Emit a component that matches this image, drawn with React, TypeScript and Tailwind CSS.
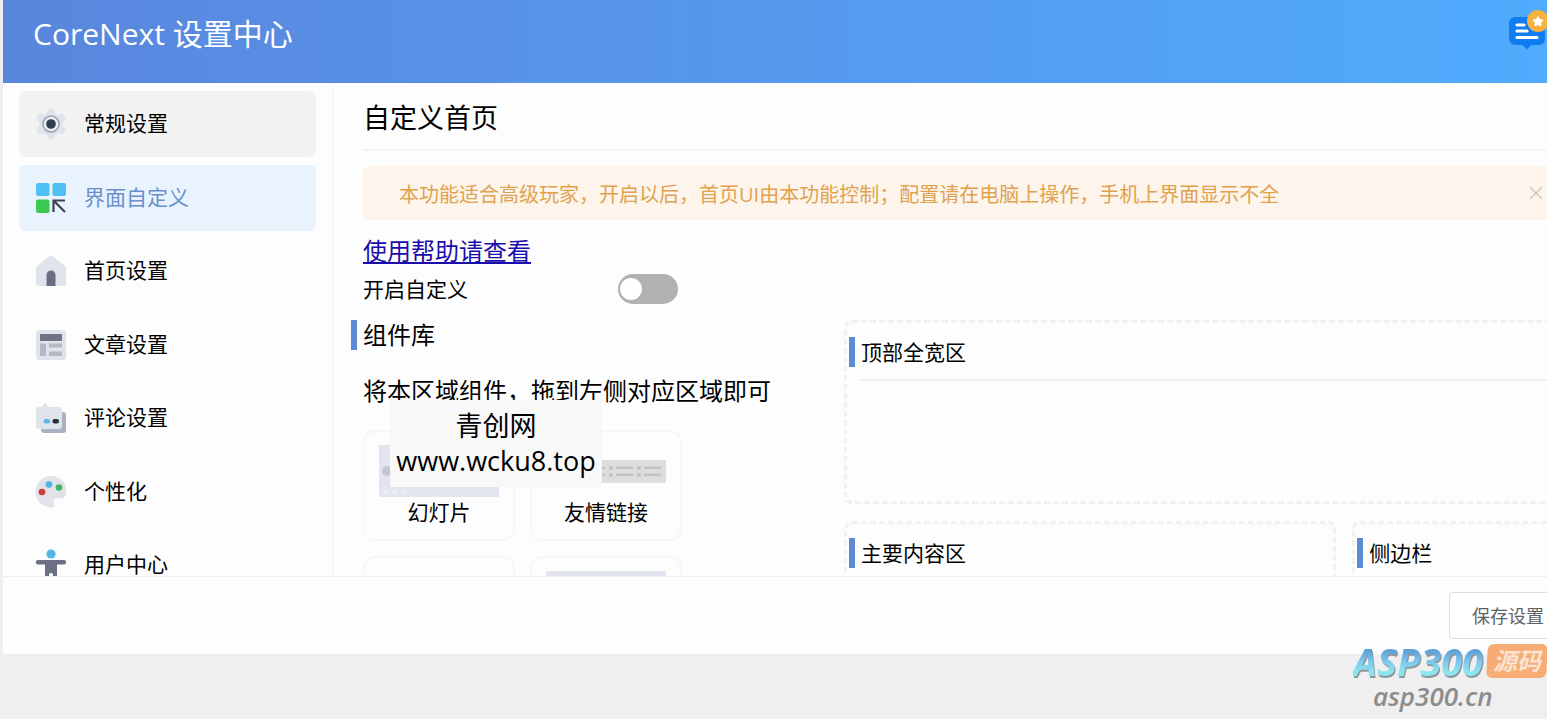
import type { ReactNode } from 'react'
import { X } from 'lucide-react'

type MenuItemProps = {
  label: string
  icon: ReactNode
  state?: 'idle' | 'hover' | 'active'
}

const ITEM_STYLE = {
  idle: 'text-black',
  hover: 'bg-[#f2f2f2] text-black',
  active: 'bg-[#e8f3fe] text-[#6a8fcb]',
}

const TOOTH = 'M11.5 6l2-5.500h5l2 5.500zM11.5 26l2 5.500h5l2-5.500z'

const IconGear = () => (
  <svg viewBox="0 0 32 32" className="size-8">
    <g fill="#dfe3ec">
      <circle cx="16" cy="16" r="11.5" />
      <path d={TOOTH} />
      <path d={TOOTH} transform="rotate(60 16 16)" />
      <path d={TOOTH} transform="rotate(120 16 16)" />
    </g>
    <circle cx="16" cy="16" r="8" fill="#eceff4" stroke="#9da7b6" strokeWidth="1.6" />
    <circle cx="16" cy="16" r="4.8" fill="#2f3e50" />
  </svg>
)

const IconLayout = () => (
  <svg viewBox="0 0 32 32" className="size-8">
    <rect x="1" y="1" width="13.5" height="13" rx="2" fill="#4fc0f5" />
    <rect x="17.5" y="1" width="13.5" height="13" rx="2" fill="#4fc0f5" />
    <rect x="1" y="17.5" width="13.5" height="13.5" rx="2" fill="#3cc94f" />
    <path d="M18.5 30V18.5H30M19 19l11 11" fill="none" stroke="#38434f" strokeWidth="2.2" />
  </svg>
)

const IconHome = () => (
  <svg viewBox="0 0 32 32" className="size-8">
    <path
      d="M14 1.6a3.4 3.4 0 0 1 4 0l11.4 9A4 4 0 0 1 31 13.8V28.5a2.5 2.5 0 0 1-2.5 2.5h-25A2.5 2.5 0 0 1 1 28.5V13.8a4 4 0 0 1 1.6-3.2z"
      fill="#dfe3ec"
    />
    <path d="M11.5 31V20a4.5 4.5 0 0 1 9 0v11z" fill="#6b6f83" />
  </svg>
)

const IconArticle = () => (
  <svg viewBox="0 0 32 32" className="size-8">
    <rect x="1" y="1" width="30" height="30" rx="3.5" fill="#dfe3ec" />
    <rect x="5" y="5" width="22" height="7" fill="#6f7387" />
    <rect x="5" y="14.5" width="6" height="12.5" fill="#b3b8c6" />
    <path d="M14 14.5h13v4H14zM14 22.5h13V27H14z" fill="#b3b8c6" />
  </svg>
)

const IconComment = () => (
  <svg viewBox="0 0 32 32" className="size-8">
    <rect x="6" y="10" width="25" height="21" rx="3" fill="#aab2c2" />
    <path
      d="M3.5 5H7l3-4.5L13 5h11.5A2.5 2.5 0 0 1 27 7.5v17a2.5 2.5 0 0 1-2.5 2.5h-21A2.5 2.5 0 0 1 1 24.5v-17A2.5 2.5 0 0 1 3.5 5z"
      fill="#dfe4ec"
    />
    <rect x="8.5" y="17" width="6.5" height="4.5" rx="2" fill="#5bb8e8" />
    <rect x="17.5" y="17" width="6.5" height="4.5" rx="2" fill="#28323c" />
  </svg>
)

const IconPalette = () => (
  <svg viewBox="0 0 32 32" className="size-8">
    <path
      d="M16 0C7.4 0 .5 7 .5 16S8 31.500 17 31.500c2.500 0 2.800-2 2-4.500-1-3.500 1-5 4.500-4.500 4.500.6 8-1.500 8-7C31.500 7 24.600 0 16 0z"
      fill="#e2e2ea"
    />
    <circle cx="7" cy="16" r="3.3" fill="#cf3b3b" />
    <circle cx="14" cy="8.5" r="3.3" fill="#4fb3ea" />
    <circle cx="24" cy="11.5" r="3.3" fill="#43b565" />
  </svg>
)

const IconUser = () => (
  <svg viewBox="0 0 32 32" className="size-8">
    <circle cx="16" cy="5" r="4.6" fill="#51b7e6" />
    <path
      d="M3 11h26a2.2 2.2 0 0 1 0 4.4h-7V32h-4v-6a2 2 0 0 0-4 0v6h-4V15.4H3A2.2 2.2 0 0 1 3 11z"
      fill="#6c7084"
    />
  </svg>
)

const MENU: MenuItemProps[] = [
  { label: '常规设置', icon: <IconGear />, state: 'hover' },
  { label: '界面自定义', icon: <IconLayout />, state: 'active' },
  { label: '首页设置', icon: <IconHome /> },
  { label: '文章设置', icon: <IconArticle /> },
  { label: '评论设置', icon: <IconComment /> },
  { label: '个性化', icon: <IconPalette /> },
  { label: '用户中心', icon: <IconUser /> },
]

const MenuItem = ({ label, icon, state = 'idle' }: MenuItemProps) => (
  <button
    type="button"
    className={`flex h-[66px] w-full shrink-0 items-center gap-[17px] rounded-md px-4 text-[21px] ${ITEM_STYLE[state]}`}
  >
    {icon}
    <span>{label}</span>
  </button>
)

const Header = () => (
  <header className="flex h-[83px] shrink-0 items-start justify-between bg-linear-to-r from-[#5986dd] to-[#4facfe] pr-[21px] pl-[30px]">
    <h1 className="pt-3 text-[30px] leading-[44px] text-white">CoreNext 设置中心</h1>
    <button type="button" aria-label="消息" className="pt-2">
      <svg viewBox="0 0 42 44" className="h-11 w-[42px]">
        <path
          d="M7 9h24a6 6 0 0 1 6 6v16a6 6 0 0 1-6 6h-8l-4 4.5-5-4.5H7a6 6 0 0 1-6-6V15a6 6 0 0 1 6-6z"
          fill="#0f7df0"
        />
        <path d="M9 17h7M9 23h10M9 29.5h20" stroke="#fff" strokeWidth="3.2" strokeLinecap="round" />
        <circle cx="30" cy="13" r="11" fill="#f5b23c" />
        <path
          d="m30 9 1.4 2.8 3.1.4-2.3 2.2.6 3.1-2.800-1.500-2.800 1.500.6-3.100-2.300-2.200 3.100-.4z"
          fill="#fff"
          stroke="#fff"
          strokeWidth="1.5"
          strokeLinejoin="round"
        />
      </svg>
    </button>
  </header>
)

const BarTitle = ({ children, large }: { children: ReactNode; large?: boolean }) => (
  <div className="flex items-center gap-1.5">
    <span className="h-[30px] w-1.5 bg-[#5b8bd5]" />
    <h3 className={large ? 'text-2xl' : 'text-[21px] leading-[28px]'}>{children}</h3>
  </div>
)

const Zone = ({ title, className = '' }: { title: string; className?: string }) => (
  <section
    className={`rounded-lg border-[3px] border-dashed border-[#f1f1f1] pt-3.5 pr-3 pl-0.5 ${className}`}
  >
    <BarTitle>{title}</BarTitle>
    <hr className="mt-3 ml-3 border-t-2 border-[#efefef]" />
  </section>
)

const ThumbSlides = () => (
  <svg viewBox="0 0 120 52" className="h-[52px] w-[120px]">
    <rect width="120" height="52" fill="#e2e4ee" />
    <circle cx="8" cy="26" r="5" fill="#c4c6d0" />
    <circle cx="112" cy="26" r="5" fill="#c4c6d0" />
    <path d="M4 45h6v4H4zM13 45h6v4h-6zM22 45h6v4h-6z" fill="#eaecf4" />
  </svg>
)

const ThumbLinks = () => (
  <svg viewBox="0 0 120 23" className="h-[23px] w-[120px]">
    <rect width="120" height="23" fill="#dedede" />
    {[8, 36, 64, 92].map((x) => (
      <g key={x} fill="#c3c3c3">
        <circle cx={x + 1} cy="8" r="2" />
        <circle cx={x + 1} cy="15" r="2" />
        <rect x={x + 6} y="6.5" width="17" height="2.5" />
        <rect x={x + 6} y="13.5" width="17" height="2.5" />
      </g>
    ))}
  </svg>
)

const Widget = ({ name, children }: { name?: string; children?: ReactNode }) => (
  <div className="flex h-[111px] w-[152px] flex-col items-center rounded-xl border-2 border-[#f7f7f7] pt-[13px]">
    <div className="flex h-[52px] items-center">{children}</div>
    {name && <span className="text-[21px] leading-[30px]">{name}</span>}
  </div>
)

const Library = () => (
  <section className="relative w-[481px] shrink-0">
    <div className="-ml-3">
      <BarTitle large>组件库</BarTitle>
    </div>
    <p className="mt-6 text-2xl">将本区域组件，拖到左侧对应区域即可</p>
    <div className="mt-[23px] grid w-fit grid-cols-2 gap-[15px]">
      <Widget name="幻灯片">
        <ThumbSlides />
      </Widget>
      <Widget name="友情链接">
        <ThumbLinks />
      </Widget>
      <Widget />
      <Widget>
        <div className="h-[52px] w-[120px] bg-[#e2e4ee]" />
      </Widget>
    </div>
    <div className="absolute top-[81px] left-[27px] flex h-[87px] w-[212px] flex-col items-center bg-[#f8f8f9] pt-2 text-[27px] leading-[35px]">
      <span>青创网</span>
      <span>www.wcku8.top</span>
    </div>
  </section>
)

const SiteMark = () => (
  <div className="absolute right-0 bottom-1.5 flex flex-col items-start">
    <div className="flex items-center">
      <span className="bg-linear-to-b from-[#5a9fd6] from-20% via-[#7cc4ec] to-[#8ce6ee] to-80% bg-clip-text pr-1 text-[38px] leading-[36px] font-bold text-transparent italic drop-shadow-[1px_2px_0px_#8b969f]">
        ASP300
      </span>
      <span className="relative px-1.5 text-2xl leading-[34px] font-bold text-[#fbe3d0] italic">
        <span className="absolute inset-0 -skew-x-3 rounded-md bg-[#f7ac75]" />
        <span className="relative">源码</span>
      </span>
    </div>
    <span className="pl-5 text-[26px] leading-[34px] font-semibold text-[#8c8c8c] italic">
      asp300.cn
    </span>
  </div>
)

export default function App() {
  return (
    <div className="relative h-screen overflow-hidden bg-[#efefef] font-['Open_Sans','Noto_Sans_CJK_SC',sans-serif] text-black">
      <div className="-mr-6 ml-[3px] flex h-[91vh] flex-col bg-[#fdfdfd]">
        <Header />

        <div className="flex min-h-0 flex-1">
          <nav className="w-[331px] shrink-0 overflow-hidden border-r-2 border-[#f8f8f8] px-4 pt-2">
            <div className="flex h-[507px] flex-col justify-between">
              {MENU.map((item) => (
                <MenuItem key={item.label} {...item} />
              ))}
            </div>
          </nav>

          <main className="min-w-0 flex-1 overflow-hidden pl-[29px]">
            <h2 className="border-b-2 border-[#f4f4f4] pt-4 pb-3 text-[27px] leading-[38px]">
              自定义首页
            </h2>

            <div
              role="alert"
              className="mt-[15px] flex h-[54px] items-center justify-between rounded-md bg-[#fdf5eb] pr-6 pl-9 text-[#e0a24f]"
            >
              <p className="pt-1 text-xl whitespace-nowrap">
                本功能适合高级玩家，开启以后，首页UI由本功能控制；配置请在电脑上操作，手机上界面显示不全
              </p>
              <button type="button" aria-label="关闭" className="text-[#c8c4be]">
                <X className="size-[22px]" strokeWidth={1.5} />
              </button>
            </div>

            <div className="mt-[15px]">
              <a href="#help" className="text-2xl text-[#1a0dab] underline">
                使用帮助请查看
              </a>
            </div>

            <div className="mt-[7px] flex items-center">
              <label htmlFor="enable" className="w-[255px] text-[21px] leading-[30px]">
                开启自定义
              </label>
              <input
                id="enable"
                type="checkbox"
                role="switch"
                className="h-[30px] w-[60px] appearance-none rounded-full bg-[#b1b1b1] p-1 pl-0.5 before:block before:size-[22px] before:rounded-full before:bg-white checked:bg-[#5b8bd5] checked:before:ml-auto"
              />
            </div>

            <div className="mt-[15px] flex">
              <Library />
              <div className="grid flex-1 grid-cols-[9fr_4fr] gap-x-4 gap-y-[17px] pt-px">
                <Zone title="顶部全宽区" className="col-span-2 h-[184px]" />
                <Zone title="主要内容区" className="h-[184px]" />
                <Zone title="侧边栏" className="h-[184px]" />
              </div>
            </div>
          </main>
        </div>

        <footer className="flex h-[78px] shrink-0 items-start justify-end border-t border-[#eeeeee] pt-[15px] pr-1">
          <button
            type="button"
            className="h-[47px] rounded border border-[#dcdcdc] bg-white px-[22px] text-lg text-[#606266]"
          >
            保存设置
          </button>
        </footer>
      </div>

      <SiteMark />
    </div>
  )
}
